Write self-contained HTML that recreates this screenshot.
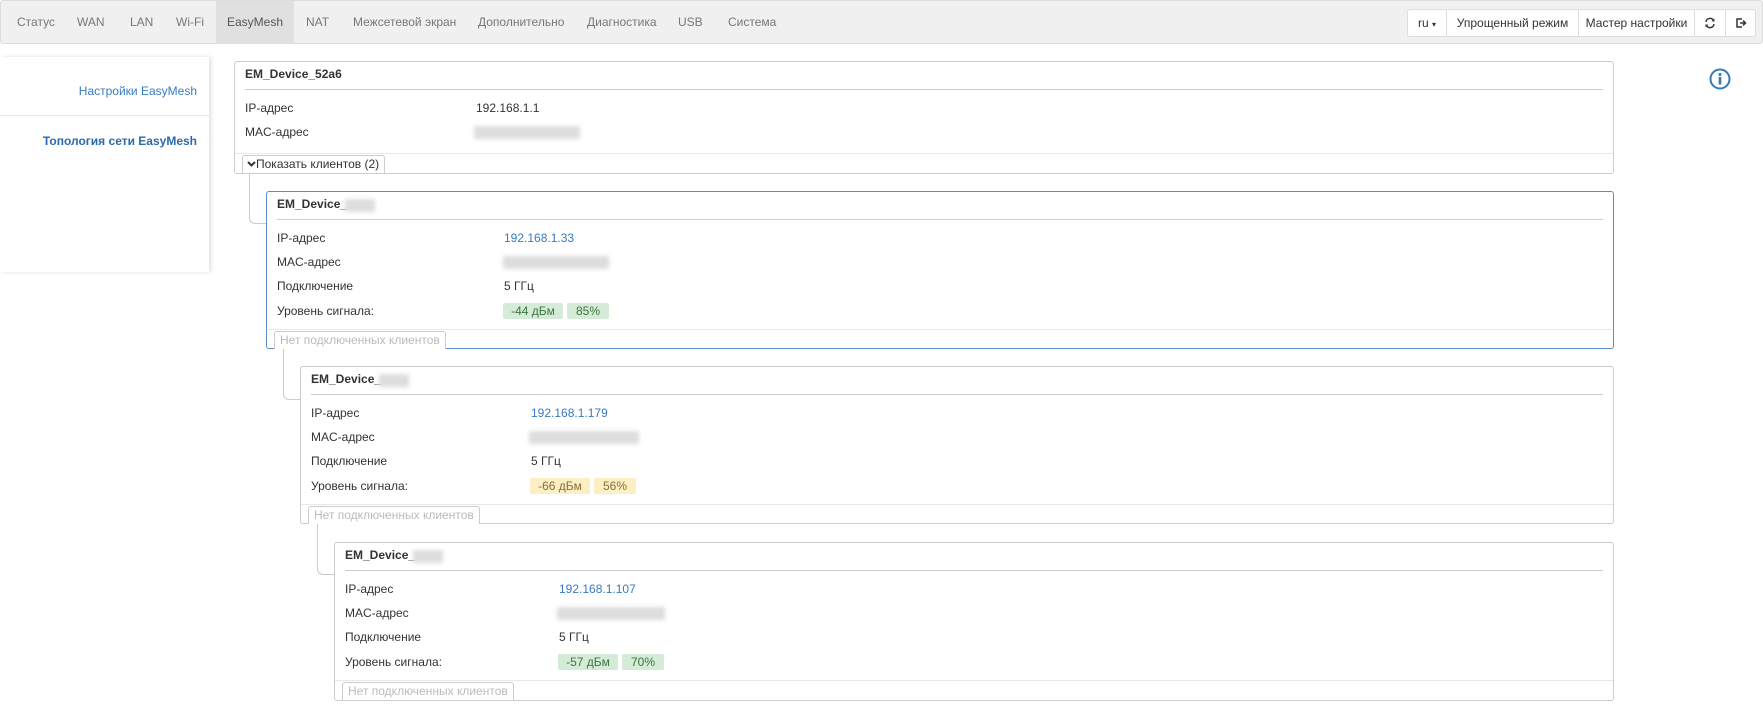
<!DOCTYPE html>
<html><head><meta charset="utf-8"><style>
*{box-sizing:border-box;margin:0;padding:0}
body{width:1763px;height:709px;background:#fff;font-family:"Liberation Sans",sans-serif;font-size:12px;color:#333;position:relative;overflow:hidden}
.a{position:absolute}
.nav{left:0;top:0;width:1763px;height:44px;background:#f0f0f0;border:1px solid #ddd;border-radius:3px}
.ni{position:absolute;top:0;height:43px;line-height:43px;color:#777;font-size:12px}
.btns{left:1407px;top:9px;height:28px;display:flex;border:1px solid #ddd;border-radius:3px;background:#fff}
.btns div{height:26px;line-height:26px;border-left:1px solid #ddd;text-align:center;font-size:12px;color:#333}
.btns div:first-child{border-left:none}
.side{left:0;top:57px;width:209px;height:215px;box-shadow:2px 0 4px rgba(0,0,0,.12)}
.card{position:absolute;border:1px solid #ccc;border-radius:3px;background:#fff;right:149px}
.card.sel{border-color:#5b8fc7}
.t{position:absolute;left:10px;top:4px;font-weight:bold;font-size:12px;line-height:16px}
.hr{position:absolute;left:10px;right:10px;top:27px;border-top:1px solid #ccc}
.r{position:absolute;left:10px;font-size:12px;line-height:16px}
.v{position:absolute;font-size:12px;line-height:16px}
.blue{color:#3a7bbf}
.fl{position:absolute;left:0;right:0;border-top:1px solid #e8e8e8}
.fb{position:absolute;height:18px;line-height:16px;border:1px solid #ccc;border-bottom:none;border-radius:3px 3px 0 0;padding:0 5px;font-size:12px;color:#bbb;background:#fff}
.blur{position:absolute;height:13px;background:#ddd;filter:blur(2px)}
.bd{position:absolute;height:16px;line-height:16px;padding:0 8px;border-radius:2px;font-size:12px}
.g{background:#d4ecd7;color:#3c763d}
.y{background:#fcefc4;color:#8a6d3b}
.conn{position:absolute;border-left:1px solid #ccc;border-bottom:1px solid #ccc;border-bottom-left-radius:6px}
</style></head><body>
<div class="a nav">
<span class="ni" style="left:16px">Статус</span>
<span class="ni" style="left:76px">WAN</span>
<span class="ni" style="left:129px">LAN</span>
<span class="ni" style="left:175px">Wi-Fi</span>
<span class="ni" style="left:215px;width:78px;background:#e0e0e0;color:#555;text-align:center">EasyMesh</span>
<span class="ni" style="left:305px">NAT</span>
<span class="ni" style="left:352px">Межсетевой экран</span>
<span class="ni" style="left:477px">Дополнительно</span>
<span class="ni" style="left:586px">Диагностика</span>
<span class="ni" style="left:677px">USB</span>
<span class="ni" style="left:727px">Система</span>
</div>
<div class="a btns">
<div style="width:38px">ru <span style="font-size:8px">▾</span></div>
<div style="width:132px">Упрощенный режим</div>
<div style="width:116px">Мастер настройки</div>
<div style="width:31px"><svg width="12" height="12" viewBox="0 0 12 12" style="margin-top:7px"><path d="M2 5A4 4 0 0 1 9.5 3.5M10 7A4 4 0 0 1 2.5 8.5" fill="none" stroke="#333" stroke-width="1.4"/><path d="M10.5 1.5v3h-3z M1.5 10.5v-3h3z" fill="#333"/></svg></div>
<div style="width:30px"><svg width="12" height="12" viewBox="0 0 12 12" style="margin-top:7px"><path d="M7 2H2v8h5" fill="none" stroke="#333" stroke-width="1.5"/><path d="M5 6h5M8 3.5 10.5 6 8 8.5" fill="none" stroke="#333" stroke-width="1.5"/></svg></div>
</div>
<div class="a side">
<div class="a" style="right:12px;top:27px;color:#3a7bbf">Настройки EasyMesh</div>
<div class="a" style="left:0;top:58px;width:209px;border-top:1px solid #e5e5e5"></div>
<div class="a" style="right:12px;top:77px;color:#2a6aad;font-weight:bold">Топология сети EasyMesh</div>
</div>
<svg class="a" style="left:1709px;top:68px" width="22" height="22" viewBox="0 0 22 22"><circle cx="11" cy="11" r="9.5" fill="none" stroke="#337ab7" stroke-width="2"/><circle cx="11" cy="6.5" r="1.5" fill="#337ab7"/><rect x="9.7" y="9" width="2.6" height="7.5" fill="#337ab7"/></svg>

<div class="conn" style="left:249px;top:172px;width:20px;height:52px"></div>
<div class="conn" style="left:283px;top:347px;width:20px;height:53px"></div>
<div class="conn" style="left:317px;top:522px;width:20px;height:53px"></div>

<div class="card" style="left:234px;top:61px;height:113px">
<div class="t">EM_Device_52a6</div><div class="hr"></div>
<div class="r" style="top:38px">IP-адрес</div><div class="v" style="left:241px;top:38px">192.168.1.1</div>
<div class="r" style="top:62px">MAC-адрес</div><div class="blur" style="left:239px;top:64px;width:106px"></div>
<div class="fl" style="top:91px"></div>
<div class="fb" style="left:7px;top:93px;color:#333;padding-left:4px"><svg width="9" height="8" viewBox="0 0 9 8" style="vertical-align:0"><path d="M1 2l3.5 3.5L8 2" fill="none" stroke="#333" stroke-width="2"/></svg>Показать клиентов (2)</div>
</div>

<div class="card sel" style="left:266px;top:191px;height:158px">
<div class="t">EM_Device_</div><div class="blur" style="left:78px;top:7px;width:30px"></div><div class="hr"></div>
<div class="r" style="top:38px">IP-адрес</div><div class="v blue" style="left:237px;top:38px">192.168.1.33</div>
<div class="r" style="top:62px">MAC-адрес</div><div class="blur" style="left:236px;top:64px;width:106px"></div>
<div class="r" style="top:86px">Подключение</div><div class="v" style="left:237px;top:86px">5 ГГц</div>
<div class="r" style="top:111px">Уровень сигнала:</div>
<div class="bd g" style="left:236px;top:111px;width:60px;text-align:center">-44 дБм</div><div class="bd g" style="left:300px;top:111px;width:42px;text-align:center">85%</div>
<div class="fl" style="top:137px"></div>
<div class="fb" style="left:7px;top:139px">Нет подключенных клиентов</div>
</div>

<div class="card" style="left:300px;top:366px;height:158px">
<div class="t">EM_Device_</div><div class="blur" style="left:78px;top:7px;width:30px"></div><div class="hr"></div>
<div class="r" style="top:38px">IP-адрес</div><div class="v blue" style="left:230px;top:38px">192.168.1.179</div>
<div class="r" style="top:62px">MAC-адрес</div><div class="blur" style="left:228px;top:64px;width:110px"></div>
<div class="r" style="top:86px">Подключение</div><div class="v" style="left:230px;top:86px">5 ГГц</div>
<div class="r" style="top:111px">Уровень сигнала:</div>
<div class="bd y" style="left:229px;top:111px;width:60px;text-align:center">-66 дБм</div><div class="bd y" style="left:293px;top:111px;width:42px;text-align:center">56%</div>
<div class="fl" style="top:137px"></div>
<div class="fb" style="left:7px;top:139px">Нет подключенных клиентов</div>
</div>

<div class="card" style="left:334px;top:542px;height:159px">
<div class="t">EM_Device_</div><div class="blur" style="left:78px;top:7px;width:30px"></div><div class="hr"></div>
<div class="r" style="top:38px">IP-адрес</div><div class="v blue" style="left:224px;top:38px">192.168.1.107</div>
<div class="r" style="top:62px">MAC-адрес</div><div class="blur" style="left:222px;top:64px;width:108px"></div>
<div class="r" style="top:86px">Подключение</div><div class="v" style="left:224px;top:86px">5 ГГц</div>
<div class="r" style="top:111px">Уровень сигнала:</div>
<div class="bd g" style="left:223px;top:111px;width:60px;text-align:center">-57 дБм</div><div class="bd g" style="left:287px;top:111px;width:42px;text-align:center">70%</div>
<div class="fl" style="top:137px"></div>
<div class="fb" style="left:7px;top:139px">Нет подключенных клиентов</div>
</div>
</body></html>
